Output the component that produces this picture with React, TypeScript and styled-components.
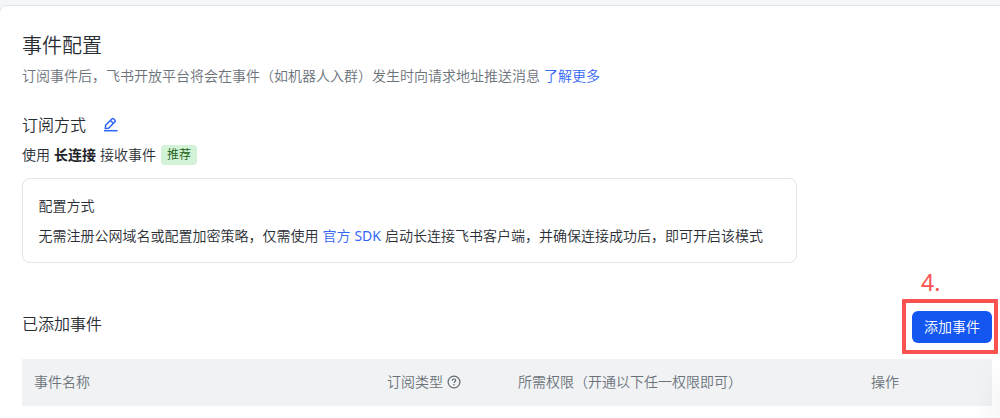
import styled, { createGlobalStyle } from 'styled-components';

const columns = [
  { title: '事件名称', width: 353 },
  { title: '订阅类型', width: 131, help: true },
  { title: '所需权限（开通以下任一权限即可）', width: 353 },
  { title: '操作', width: 133 },
];

const EditIcon = () => (
  <svg width="16" height="16" viewBox="0 0 16 16" fill="none" stroke="#2f66f6" strokeWidth="1.5">
    <path d="M2.6 8.3 9.1 1.8a1 1 0 0 1 1.4 0l1.5 1.5a1 1 0 0 1 0 1.4l-6.5 6.5-3.2.4z" strokeLinejoin="round" />
    <path d="m7.5 3.5 2.7 2.7" />
    <path d="M1 13.7h13.6" />
  </svg>
);

const HelpIcon = () => (
  <svg width="14" height="14" viewBox="0 0 14 14" fill="none" stroke="#646a73" strokeWidth="1.2">
    <circle cx="7" cy="7" r="5.9" />
    <path d="M5.3 5.7c0-1 .7-1.7 1.7-1.7s1.7.6 1.7 1.5c0 1.2-1.7 1.3-1.7 2.6" />
    <path d="M7 9.1v1.3" />
  </svg>
);

export default function App() {
  return (
    <>
      <GlobalStyle />
      <Page>
        <Card>
          <Title>事件配置</Title>
          <Description>
            订阅事件后，飞书开放平台将会在事件（如机器人入群）发生时向请求地址推送消息 <Link>了解更多</Link>
          </Description>

          <ModeHeader>
            <SubTitle>订阅方式</SubTitle>
            <EditIcon />
          </ModeHeader>
          <ModeRow>
            <ModeText>
              使用 <strong>长连接</strong> 接收事件
            </ModeText>
            <Tag>推荐</Tag>
          </ModeRow>

          <ConfigBox>
            <p>配置方式</p>
            <p>
              无需注册公网域名或配置加密策略，仅需使用{' '}
              <Link>
                官方 <Latin>SDK</Latin>
              </Link>{' '}
              启动长连接飞书客户端，并确保连接成功后，即可开启该模式
            </p>
          </ConfigBox>

          <EventsHeader>
            <SubTitle>已添加事件</SubTitle>
            <ButtonWrap>
              <AddButton>添加事件</AddButton>
              <Highlight />
              <StepLabel>4.</StepLabel>
            </ButtonWrap>
          </EventsHeader>

          <TableHead>
            {columns.map((column) => (
              <HeadCell key={column.title} $width={column.width}>
                {column.title}
                {column.help && <HelpIcon />}
              </HeadCell>
            ))}
          </TableHead>
          <CornerShade />
        </Card>
      </Page>
    </>
  );
}

const GlobalStyle = createGlobalStyle`
  * {
    box-sizing: border-box;
  }

  body {
    margin: 0;
    overflow: hidden;
    background-color: #f5f6f7;
    font-family: 'Noto Sans', 'Noto Sans CJK SC', sans-serif;
    font-size: 14px;
    font-weight: 350;
    word-spacing: 0.3px;
    color: #2a2e34;
  }

  h2, h3, p {
    margin: 0;
    font-weight: 350;
  }
`;

const Page = styled.div`
  height: 418px;
  padding-top: 5px;
  overflow: hidden;
`;

const Card = styled.main`
  position: relative;
  width: 1010px;
  height: 430px;
  margin-left: -1px;
  padding: 25px 17px 0 22px;
  border: 1px solid #e3e5e7;
  border-radius: 8px;
  background-color: #fff;
`;

const Title = styled.h2`
  font-size: 20px;
  line-height: 30px;
`;

const Description = styled.p`
  margin-top: 4px;
  line-height: 22px;
  color: #6c727a;
`;

const Link = styled.a`
  color: #3366f6;
  cursor: pointer;
`;

const Latin = styled.span`
  font-weight: 400;
`;

const ModeHeader = styled.div`
  display: flex;
  align-items: center;
  gap: 17px;
  margin-top: 26px;
`;

const SubTitle = styled.h3`
  font-size: 16px;
  line-height: 24px;
`;

const ModeRow = styled.div`
  display: flex;
  align-items: center;
  gap: 5px;
  height: 22px;
  margin-top: 7px;

  strong {
    font-weight: 700;
    color: #1f2329;
  }
`;

const ModeText = styled.span`
  line-height: 20px;
`;

const Tag = styled.span`
  height: 20px;
  padding: 0 6px;
  border-radius: 4px;
  background-color: #d3f3d9;
  font-size: 12px;
  line-height: 20px;
  color: #186010;
`;

const ConfigBox = styled.div`
  display: flex;
  flex-direction: column;
  gap: 8px;
  width: 775px;
  height: 85px;
  margin-top: 12px;
  padding: 16px 15.5px;
  border: 1px solid #e2e4e6;
  border-radius: 8px;
  line-height: 22px;
`;

const EventsHeader = styled.div`
  display: flex;
  justify-content: space-between;
  width: 970px;
  margin-top: 48px;

  h3 {
    padding-top: 1px;
  }
`;

const ButtonWrap = styled.div`
  position: relative;
`;

const AddButton = styled.button`
  display: block;
  width: 80px;
  height: 32px;
  padding: 0 0 2px;
  border: none;
  border-radius: 6px;
  background-color: #1456f0;
  font: inherit;
  color: #fff;
`;

const Highlight = styled.div`
  position: absolute;
  inset: -12px -6px -11px -10px;
  border: 4px solid #fa5151;
  border-radius: 1px;
`;

const StepLabel = styled.span`
  position: absolute;
  left: 9px;
  top: -45px;
  font-size: 23px;
  font-weight: 400;
  line-height: 32px;
  color: #fa5151;
`;

const TableHead = styled.div`
  display: flex;
  width: 970px;
  height: 47px;
  margin-top: 16px;
  background-color: #f0f2f4;
  color: #6c727a;
`;

const HeadCell = styled.div<{ $width: number }>`
  display: flex;
  align-items: center;
  gap: 4px;
  width: ${(props) => props.$width}px;
  padding: 0 0 3px 12px;

  svg {
    position: relative;
    top: 1px;
  }
`;

const CornerShade = styled.div`
  position: absolute;
  left: 975px;
  top: 353px;
  width: 26px;
  height: 64px;
  background: linear-gradient(to right, rgba(31, 35, 41, 0), rgba(31, 35, 41, 0.035));
  mask-image: linear-gradient(transparent, #000 40px);
`;
